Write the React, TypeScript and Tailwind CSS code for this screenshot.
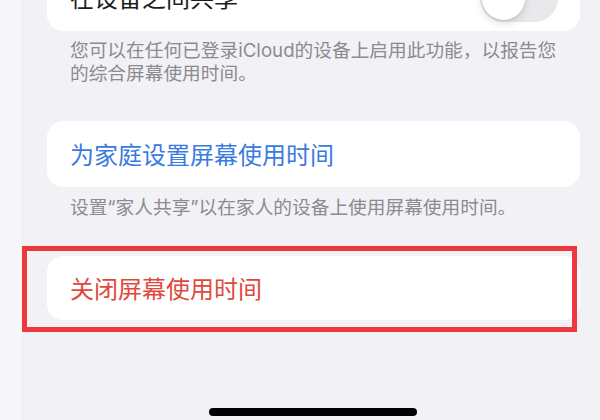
export default function App() {
  return (
    <div
      className="flex h-[420px] w-[600px] overflow-hidden bg-[#f2f2f6]"
      style={{ fontFamily: '"Inter", "Noto Sans CJK SC", sans-serif' }}
    >
      {/* left edge strip */}
      <div className="h-full w-[21px] shrink-0 bg-[#f7f7f9]" />

      <div className="flex flex-1 flex-col">
        <div className="ml-[26px] mr-[20px] flex flex-col">
          {/* share across devices */}
          <div className="mt-[-42px] flex h-[73px] items-center justify-between rounded-[16px] bg-white pl-[23px] pr-[22px] pt-[8px]">
            <span className="text-[24px] text-[#1c1c1e]">在设备之间共享</span>
            <div className="relative h-[47px] w-[78px] rounded-full bg-[#e9e9ec]">
              <div className="absolute left-[2px] top-[2px] h-[43px] w-[43px] rounded-full bg-white shadow-[0_3px_8px_rgba(0,0,0,0.15),0_1px_1px_rgba(0,0,0,0.08)]" />
            </div>
          </div>
          <p className="pl-[23px] pr-[14px] pt-[8px] text-[18.7px] leading-[23px] text-[#8b8b90]">
            您可以在任何已登录iCloud的设备上启用此功能，以报告您的综合屏幕使用时间。
          </p>

          {/* family */}
          <div className="mt-[36px] flex h-[66px] items-center rounded-[16px] bg-white px-[23px] pt-[3px]">
            <span className="text-[24px] text-[#3a7be0]">为家庭设置屏幕使用时间</span>
          </div>
          <p className="px-[23px] pt-[9px] text-[18.7px] leading-[23px] text-[#8b8b90]">
            设置“家人共享”以在家人的设备上使用屏幕使用时间。
          </p>

          {/* turn off */}
          <div className="relative mt-[37px]">
            <div className="flex h-[64px] items-center rounded-[16px] bg-white px-[23px] pt-[4px]">
              <span className="text-[24px] text-[#e0483e]">关闭屏幕使用时间</span>
            </div>
            <div className="pointer-events-none absolute bottom-[-12px] left-[-25px] right-[3px] top-[-10px] border-[5px] border-[#ee383e]" />
          </div>
        </div>

        <div className="mt-auto mb-[4px] flex justify-center pl-[5px]">
          <div className="h-[8px] w-[208px] rounded-full bg-black" />
        </div>
      </div>
    </div>
  )
}
